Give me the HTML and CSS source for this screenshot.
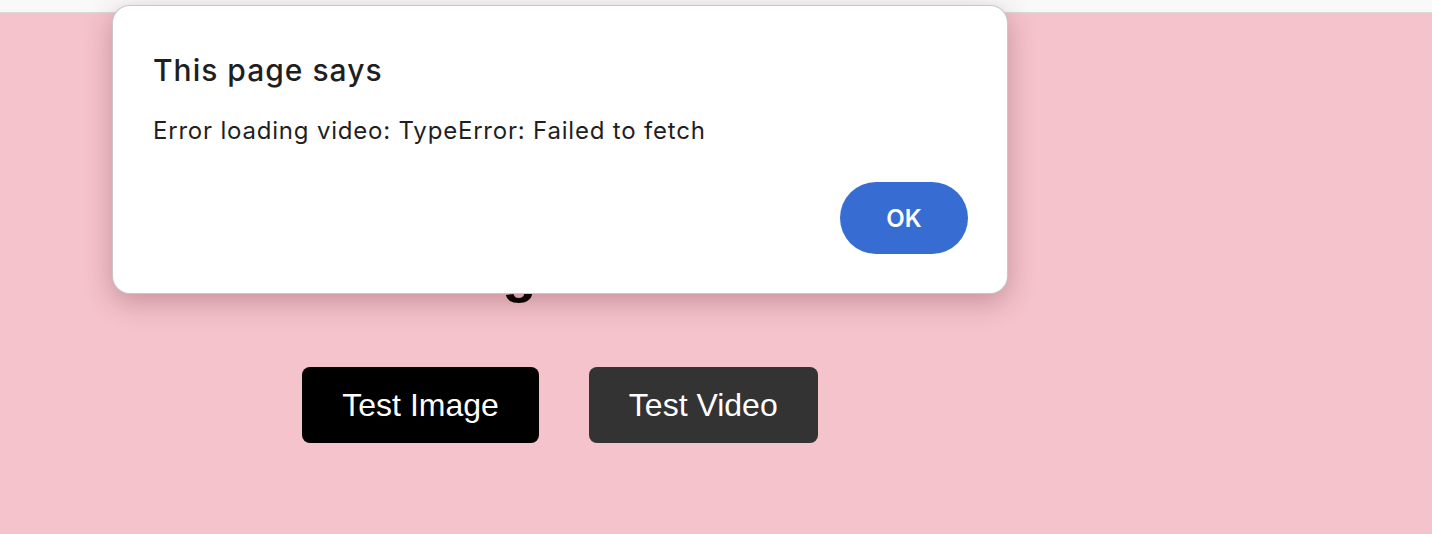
FILE: index.html
```html
<!DOCTYPE html>
<html lang="en">
<head>
<meta charset="utf-8">
<title>Image Test</title>
<link rel="stylesheet" href="styles.css">
</head>
<body>
<div class="topbar"></div>
<main class="page">
  <h1 class="heading">Image Test</h1>
  <div class="actions">
    <button class="btn btn-image">Test Image</button>
    <button class="btn btn-video">Test Video</button>
  </div>
</main>
<div class="dialog" role="alertdialog">
  <h2 class="dialog-title">This page says</h2>
  <p class="dialog-message">Error loading video: TypeError: Failed to fetch</p>
  <div class="dialog-actions">
    <button class="dialog-ok">OK</button>
  </div>
</div>
</body>
</html>
```

FILE: styles.css
```css
html, body {
  margin: 0;
  padding: 0;
}
body {
  background: #f5c3cc;
  font-family: "Liberation Sans", Arial, sans-serif;
  height: 534px;
  overflow: hidden;
}
.topbar {
  height: 12px;
  background: #f9f9f9;
  border-bottom: 1px solid #dcdcd7;
}
.page {
  width: 1120px;
  text-align: center;
}
.heading {
  margin: 227px 0 0 0;
  padding-right: 20px;
  font-size: 56px;
  line-height: 64px;
  font-weight: 700;
  color: #000;
}
.actions {
  display: flex;
  justify-content: center;
  gap: 50px;
  margin-top: 63px;
}
.btn {
  font-family: "Liberation Sans", Arial, sans-serif;
  font-size: 32px;
  line-height: 36px;
  padding: 20px 40px;
  border: none;
  border-radius: 8px;
  color: #fff;
  cursor: pointer;
}
.btn-image { background: #000; }
.btn-video { background: #333; }

.dialog {
  position: absolute;
  left: 112px;
  top: 5px;
  width: 896px;
  height: 289px;
  box-sizing: border-box;
  padding: 40px 40px 40px 41px;
  background: #fff;
  border-radius: 18px;
  border: 1px solid rgba(0,0,0,0.22);
  box-shadow: 0 8px 28px rgba(90, 30, 40, 0.3);
  display: flex;
  flex-direction: column;
  font-family: Inter, "Noto Sans", sans-serif;
  color: #1f1f1f;
}
.dialog-title {
  margin: 6px 0 0 -1px;
  font-size: 30px;
  line-height: 36px;
  font-weight: 500;
  letter-spacing: 1px;
}
.dialog-message {
  margin: 28px 0 0 -1px;
  font-size: 24px;
  line-height: 30px;
  font-weight: 400;
  letter-spacing: 0.8px;
}
.dialog-actions {
  margin-top: auto;
  display: flex;
  justify-content: flex-end;
}
.dialog-ok {
  width: 128px;
  height: 72px;
  margin: 0 -1px -1px 0;
  border: none;
  border-radius: 36px;
  background: #376dd2;
  color: #fff;
  font-family: Inter, "Noto Sans", sans-serif;
  font-size: 24px;
  font-weight: 600;
  cursor: pointer;
}
```
